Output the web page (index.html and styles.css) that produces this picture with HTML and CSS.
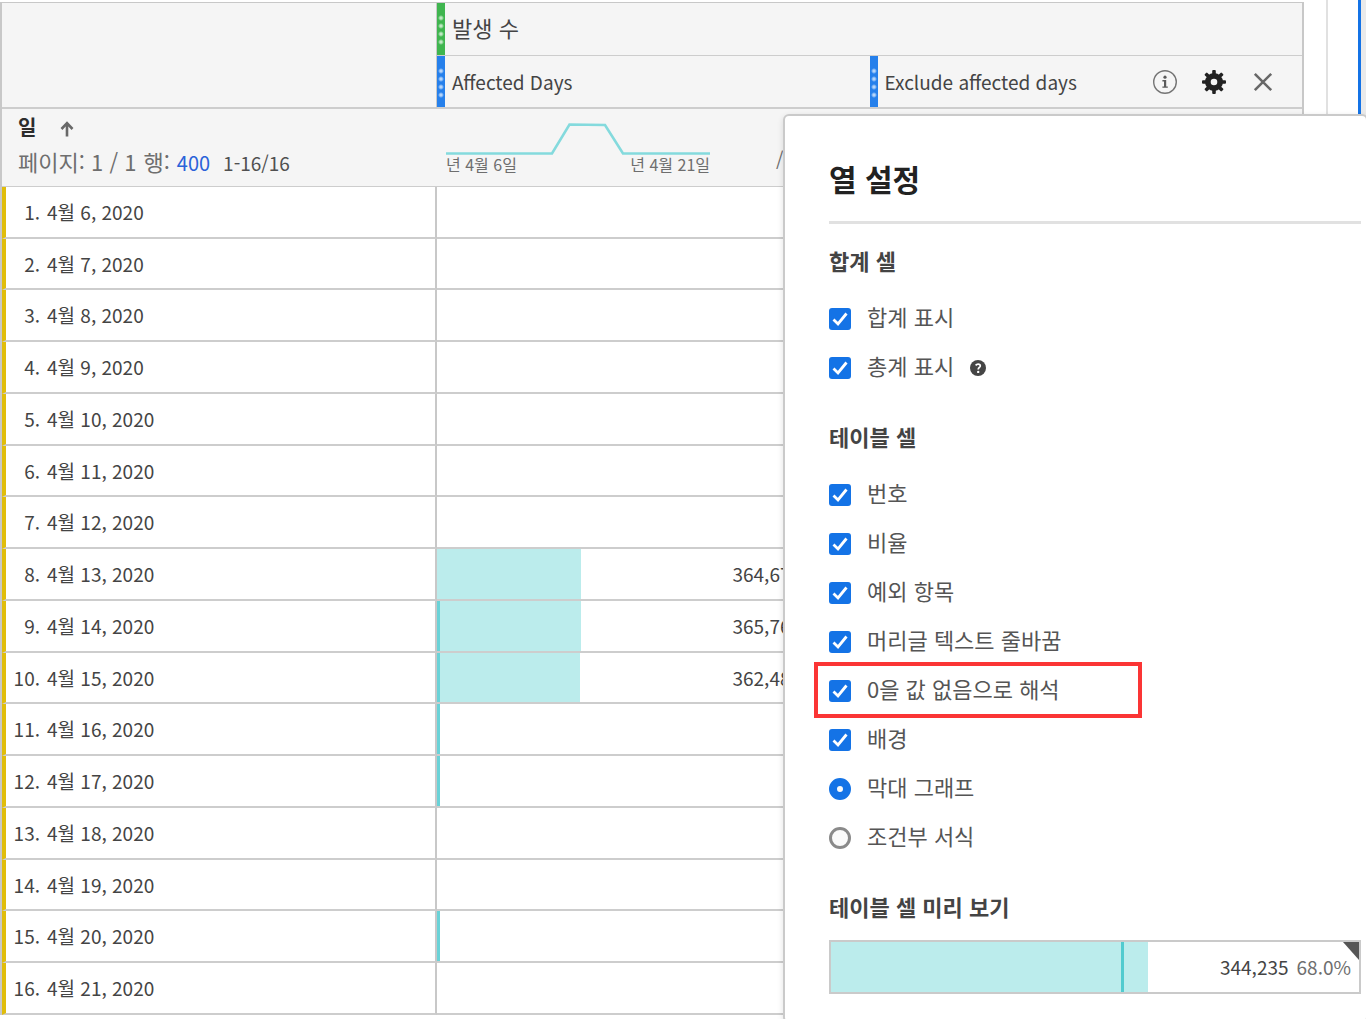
FILE: index.html
```html
<!DOCTYPE html>
<html lang="ko">
<head>
<meta charset="utf-8">
<meta name="viewport" content="width=device-width, initial-scale=1">
<title>열 설정</title>
<link rel="stylesheet" href="styles.css">
</head>
<body>
<div class="page">
  <main class="table-area">
    <table class="freeform">
      <colgroup><col class="col-dimension"><col><col></colgroup>
      <thead>
        <tr class="head-row">
          <td class="corner" rowspan="2"></td>
          <th colspan="2" scope="colgroup"><div class="head-cell"><span class="handle handle-metric"></span><span class="head-label metric-label">발생 수</span></div></th>
        </tr>
        <tr class="head-row head-row-last">
          <th scope="col"><div class="head-cell"><span class="handle"></span><span class="head-label">Affected Days</span></div></th>
          <th scope="col">
            <div class="head-cell">
              <span class="handle"></span><span class="head-label">Exclude affected days</span>
              <span class="head-actions">
                <button type="button" class="icon-button" aria-label="정보">
                  <svg width="26" height="26" viewBox="0 0 26 26"><circle cx="13" cy="13" r="11.3" fill="none" stroke="#747474" stroke-width="1.4"/><circle cx="13" cy="8.2" r="1.6" fill="#5a5a5a"/><path d="M10.4 11h3.8v6.4h1.6v1.4h-5.4v-1.4H12v-5h-1.6z" fill="#5a5a5a"/></svg>
                </button>
                <button type="button" class="icon-button" aria-label="열 설정">
                  <svg width="26" height="26" viewBox="-13 -13 26 26"><g fill="#222"><path fill-rule="evenodd" d="M0-9a9 9 0 1 0 0 18a9 9 0 1 0 0-18zM0-3.300a3.300 3.300 0 1 1 0 6.600a3.300 3.300 0 1 1 0-6.600z"/><rect x="-1.800" y="-12" width="3.600" height="5" rx="1"/><rect x="-1.800" y="7" width="3.600" height="5" rx="1"/><rect x="-12" y="-1.800" width="5" height="3.600" rx="1"/><rect x="7" y="-1.800" width="5" height="3.600" rx="1"/><g transform="rotate(45)"><rect x="-1.800" y="-12" width="3.600" height="5" rx="1"/><rect x="-1.800" y="7" width="3.600" height="5" rx="1"/><rect x="-12" y="-1.800" width="5" height="3.600" rx="1"/><rect x="7" y="-1.800" width="5" height="3.600" rx="1"/></g></g></svg>
                </button>
                <button type="button" class="icon-button" aria-label="닫기">
                  <svg width="26" height="26" viewBox="0 0 26 26"><path d="M4.8 4.8l16.4 16.4M21.2 4.8L4.8 21.2" stroke="#686868" stroke-width="2.6" fill="none"/></svg>
                </button>
              </span>
            </div>
          </th>
        </tr>
        <tr class="summary-row">
          <th scope="col">
            <div class="dimension-title"><span>일</span>
              <button type="button" class="sort-button" aria-label="정렬"><svg width="14" height="16" viewBox="0 0 14 16"><path d="M7 15.5V3M1.5 8L7 2.2L12.500 8" fill="none" stroke="#686868" stroke-width="2.600"/></svg></button>
            </div>
            <div class="paging"><span>페이지: 1 / 1</span><span>행:</span><a href="#rows">400</a><span class="range">1-16/16</span></div>
          </th>
          <td>
            <div class="summary">
              <div class="trend">
                <svg class="trend-line" viewBox="0 0 264 33" height="33" preserveAspectRatio="none"><path d="M0 30.500H106L123.500 1.500L159 2L177 30.500H264" fill="none" stroke="#84dadd" stroke-width="2.600"/></svg>
                <div class="trend-dates"><span>년 4월 6일</span><span>년 4월 21일</span></div>
              </div>
              <span class="total">/</span>
            </div>
          </td>
          <td></td>
        </tr>
      </thead>
      <tbody id="rows">
        <tr><th scope="row"><span class="index">1.</span>4월 6, 2020</th><td></td><td></td></tr>
        <tr><th scope="row"><span class="index">2.</span>4월 7, 2020</th><td></td><td></td></tr>
        <tr><th scope="row"><span class="index">3.</span>4월 8, 2020</th><td></td><td></td></tr>
        <tr><th scope="row"><span class="index">4.</span>4월 9, 2020</th><td></td><td></td></tr>
        <tr><th scope="row"><span class="index">5.</span>4월 10, 2020</th><td></td><td></td></tr>
        <tr><th scope="row"><span class="index">6.</span>4월 11, 2020</th><td></td><td></td></tr>
        <tr><th scope="row"><span class="index">7.</span>4월 12, 2020</th><td></td><td></td></tr>
        <tr><th scope="row"><span class="index">8.</span>4월 13, 2020</th><td><div class="value-cell"><span class="bar" style="width:33.3%"></span><span class="value">364,67</span></div></td><td></td></tr>
        <tr><th scope="row"><span class="index">9.</span>4월 14, 2020</th><td><div class="value-cell marked"><span class="bar" style="width:32.9%"></span><span class="value">365,76</span></div></td><td></td></tr>
        <tr><th scope="row"><span class="index">10.</span>4월 15, 2020</th><td><div class="value-cell marked"><span class="bar" style="width:32.7%"></span><span class="value">362,48</span></div></td><td></td></tr>
        <tr><th scope="row"><span class="index">11.</span>4월 16, 2020</th><td><div class="value-cell marked"></div></td><td></td></tr>
        <tr><th scope="row"><span class="index">12.</span>4월 17, 2020</th><td><div class="value-cell marked"></div></td><td></td></tr>
        <tr><th scope="row"><span class="index">13.</span>4월 18, 2020</th><td></td><td></td></tr>
        <tr><th scope="row"><span class="index">14.</span>4월 19, 2020</th><td></td><td></td></tr>
        <tr><th scope="row"><span class="index">15.</span>4월 20, 2020</th><td><div class="value-cell marked"></div></td><td></td></tr>
        <tr><th scope="row"><span class="index">16.</span>4월 21, 2020</th><td></td><td></td></tr>
      </tbody>
    </table>
  </main>
  <div class="gutter"></div>
  <div class="rail"></div>

  <section class="popover" aria-labelledby="popover-title">
    <h1 id="popover-title">열 설정</h1>
    <fieldset>
      <legend>합계 셀</legend>
      <div class="option"><input type="checkbox" id="totals" checked><label for="totals">합계 표시</label></div>
      <div class="option"><input type="checkbox" id="grand" checked><label for="grand">총계 표시</label>
        <button type="button" class="help" aria-label="도움말"><svg width="16" height="16" viewBox="0 0 16 16"><circle cx="8" cy="8" r="8" fill="#454545"/><path d="M5.600 5.400C6.500 4.300 7.200 4.100 8.100 4.100C9.500 4.100 10.300 4.900 10.300 5.900C10.300 7.400 8.200 7.600 8.200 9.600" fill="none" stroke="#fff" stroke-width="1.700"/><circle cx="8.200" cy="11.900" r="1.200" fill="#fff"/></svg></button>
      </div>
    </fieldset>
    <fieldset>
      <legend>테이블 셀</legend>
      <div class="option"><input type="checkbox" id="number" checked><label for="number">번호</label></div>
      <div class="option"><input type="checkbox" id="percent" checked><label for="percent">비율</label></div>
      <div class="option"><input type="checkbox" id="anomaly" checked><label for="anomaly">예외 항목</label></div>
      <div class="option"><input type="checkbox" id="wrap" checked><label for="wrap">머리글 텍스트 줄바꿈</label></div>
      <div class="option highlighted"><input type="checkbox" id="zero" checked><label for="zero">0을 값 없음으로 해석</label></div>
      <div class="option"><input type="checkbox" id="background" checked><label for="background">배경</label></div>
      <div class="option"><input type="radio" name="style" id="bar-graph" checked><label for="bar-graph">막대 그래프</label></div>
      <div class="option"><input type="radio" name="style" id="conditional"><label for="conditional">조건부 서식</label></div>
    </fieldset>
    <h2>테이블 셀 미리 보기</h2>
    <div class="preview">
      <span class="preview-bar" style="width:61%"><span class="preview-marker"></span></span>
      <span class="preview-value">344,235</span><span class="preview-percent">68.0%</span>
    </div>
  </section>
</div>
</body>
</html>
```
FILE: styles.css
```css
* { box-sizing: border-box; }

body {
  margin: 0;
  background: #fff;
  color: #444;
  font: 19px/26px "Noto Sans CJK KR", "Open Sans", sans-serif;
}

button {
  padding: 0;
  border: 0;
  background: none;
  line-height: 0;
}

svg { display: block; }

.page {
  position: relative;
  display: flex;
  min-height: 100vh;
  overflow: hidden;
}

.table-area {
  flex: 1;
  min-width: 0;
  padding-top: 2px;
}

.gutter {
  width: 24px;
  border-right: 2px solid #e1e1e1;
}

.rail {
  width: 38px;
  background: linear-gradient(to right, #fff 30px, #1473e6 30px, #1473e6 33px, #eaeaea 33px);
}

/* Freeform table */
.freeform {
  width: 100%;
  table-layout: fixed;
  border-spacing: 0;
  border: solid #c8c8c8;
  border-width: 1px 2px 0;
}

.col-dimension { width: 435px; }

.freeform th,
.freeform td {
  padding: 0;
  font-weight: 400;
  text-align: left;
  border-bottom: 2px solid #cdcdcd;
}

.freeform thead { background: #f5f5f5; }
.head-row { height: 53px; }
.head-row .corner { border-right: 1px solid #c8c8c8; }
.freeform .head-row:first-child th { border-bottom-width: 1px; }

.head-cell {
  display: flex;
  align-items: center;
  height: 52px;
}

.head-row-last .head-cell { height: 51px; }

.handle {
  align-self: stretch;
  flex: none;
  width: 8px;
  background:
    linear-gradient(#2680eb, #2680eb) top / 8px 11px no-repeat,
    linear-gradient(#2680eb, #2680eb) bottom / 8px 9px no-repeat,
    radial-gradient(circle at 4px 4px, #b5d5fa 1px, #2680eb 3px) 0 11px / 8px 8px repeat-y;
}

.handle-metric {
  background:
    linear-gradient(#3fb54f, #3fb54f) top / 8px 11px no-repeat,
    linear-gradient(#3fb54f, #3fb54f) bottom / 8px 9px no-repeat,
    radial-gradient(circle at 4px 4px, #bfe8c4 1px, #3fb54f 3px) 0 11px / 8px 8px repeat-y;
}

.head-label { padding-left: 7px; }

.metric-label {
  padding-bottom: 4px;
  font-size: 22px;
}

.head-actions {
  display: flex;
  gap: 23px;
  margin-left: auto;
  padding-right: 26px;
}

.summary-row { height: 78px; }
.freeform .summary-row > * { border-bottom-width: 1px; }
.freeform .summary-row th { padding: 0 0 8px 16px; }

.dimension-title {
  display: flex;
  align-items: center;
  gap: 24px;
  height: 34px;
  color: #2c2c2c;
  font-size: 20px;
  font-weight: 700;
}

.sort-button { padding-top: 4px; }

.paging {
  display: flex;
  align-items: baseline;
  gap: 7px;
  height: 34px;
  font-size: 22px;
  line-height: 34px;
  color: #6e6e6e;
}

.paging a {
  color: #2a62d9;
  font-size: 20px;
  text-decoration: none;
}

.range {
  padding-left: 6px;
  font-size: 19px;
  color: #505050;
}

.summary {
  display: flex;
  align-items: center;
  padding-left: 9px;
}

.trend { width: 264px; }
.trend-line { width: 100%; }

.trend-dates {
  display: flex;
  justify-content: space-between;
  font-size: 16px;
  line-height: 16px;
  color: #6e6e6e;
}

.total {
  padding: 22px 0 0 66px;
  color: #6e6e6e;
}

.freeform tbody tr { height: 52px; }
.freeform tbody tr:nth-child(4n + 2) { height: 51px; }

.freeform tbody th {
  border-left: 4px solid #e0bd0b;
  border-right: 2px solid #c8c8c8;
}

.index {
  display: inline-block;
  width: 34px;
  margin-right: 7px;
  text-align: right;
}

.value-cell {
  display: flex;
  align-items: center;
  height: 50px;
}

tr:nth-child(4n + 2) .value-cell { height: 49px; }
.marked { border-left: 3px solid #6ad2d7; }

.bar {
  align-self: stretch;
  background: #bbecec;
}

.value {
  margin-left: auto;
  padding-right: 79px;
}

/* Column settings popover */
.popover {
  position: absolute;
  top: 114px;
  right: -2px;
  bottom: -4px;
  width: 585px;
  padding: 40px 5px 0 44px;
  background: #fff;
  border: 2px solid #cacaca;
  border-radius: 6px;
  box-shadow: 0 2px 6px rgba(0, 0, 0, 0.12);
}

h1 {
  margin: 0;
  padding-bottom: 20px;
  border-bottom: 3px solid #e1e1e1;
  color: #222;
  font-size: 30px;
  line-height: 45px;
}

fieldset {
  min-width: 0;
  margin: 0 0 28px;
  padding: 0;
  border: 0;
}

legend,
h2 {
  margin: 0;
  padding: 20px 0 18px;
  font-size: 22px;
  font-weight: 700;
  line-height: 32px;
}

fieldset + fieldset legend { padding-top: 0; }

h2 { padding: 0 0 18px; }

.option {
  position: relative;
  display: flex;
  align-items: center;
  gap: 16px;
  height: 49px;
  font-size: 22px;
  color: #555;
}

.option label { padding-bottom: 5px; }

.option input {
  appearance: none;
  flex: none;
  width: 22px;
  height: 22px;
  margin: 0;
  border-radius: 3px;
  background: #1473e6 url("data:image/svg+xml,%3Csvg xmlns='http://www.w3.org/2000/svg' viewBox='0 0 22 22'%3E%3Cpath d='M4.500 11.500L9 16L17.500 5.500' fill='none' stroke='white' stroke-width='2.800'/%3E%3C/svg%3E") center / 22px;
}

.option input[type="radio"] {
  border: 3px solid #8a8a8a;
  border-radius: 50%;
  background: #fafafa;
}

.option input[type="radio"]:checked { border: 8px solid #1473e6; }

.highlighted::after {
  content: "";
  box-sizing: border-box;
  position: absolute;
  left: -15px;
  top: -4px;
  width: 328px;
  height: 56px;
  border: 4px solid #fb3535;
  pointer-events: none;
}

.preview {
  position: relative;
  display: flex;
  align-items: center;
  height: 54px;
  padding-right: 8px;
  border: 2px solid #cacaca;
}

.preview::after {
  content: "";
  position: absolute;
  top: 0;
  right: 0;
  border-top: 18px solid #555;
  border-left: 16px solid transparent;
}

.preview-bar {
  display: flex;
  justify-content: flex-end;
  align-self: stretch;
  padding-right: 24px;
  background: #bbecec;
}

.preview-marker {
  width: 3px;
  background: #51cbcf;
}

.preview-value { margin-left: auto; }

.preview-percent {
  padding-left: 8px;
  color: #6e6e6e;
}
```
